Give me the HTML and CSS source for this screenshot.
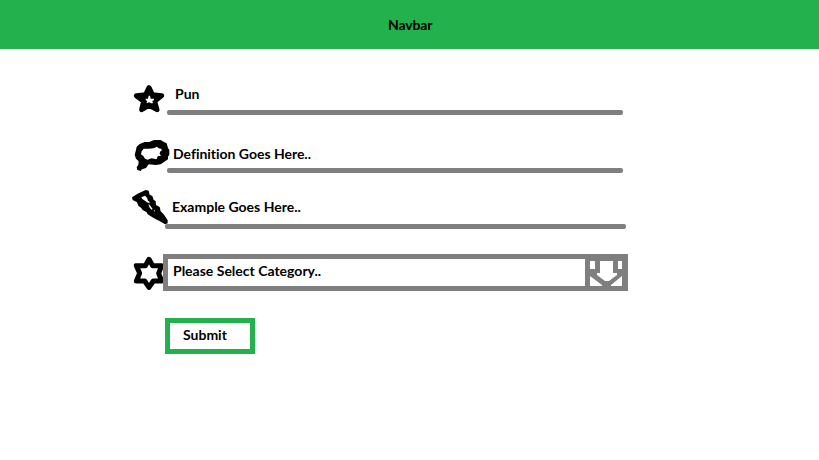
FILE: index.html
```html
<!DOCTYPE html>
<html lang="en">
<head>
<meta charset="utf-8">
<title>Navbar</title>
<link rel="stylesheet" href="styles.css">
</head>
<body>
<header class="navbar"><span class="brand">Navbar</span></header>
<form class="form">
  <div class="row row-pun">
    <svg class="icon" viewBox="15 6 90 105"><path fill-rule="evenodd" stroke="#000" stroke-width="15" stroke-linejoin="round" d="M63 29L73 50L101 53L80 70L87 95L63 82L41 95L47 70L25 53L53 50Z"/><path fill="#fff" d="M62 53H66L68 62H78V66L73 69L75 76H69L64 73L56 76L57 69L53 66V62H60Z"/></svg>
    <div class="field"><span class="text pun">Pun</span></div>
  </div>
  <div class="row row-definition">
    <svg class="icon" viewBox="15 18 90 105"><path fill-rule="evenodd" d="M35 36L50 30H64L78 24H98L108 30L116 34L120 48L124 54V68L120 74V82L108 90L98 97L84 99L62 97L54 108L42 112L38 117L28 114L26 106L31 98L32 88L24 80L20 68L23 58L26 44ZM47 50L41 58L39 67L46 72L51 80L59 83L70 79L86 82L89 73L99 71L95 65L96 59L102 55L99 50L92 49L87 44L77 49L62 50Z"/></svg>
    <div class="field"><span class="text definition">Definition Goes Here..</span></div>
  </div>
  <div class="row row-example">
    <svg class="icon" viewBox="15 18 90 117"><path fill-rule="evenodd" d="M12 40L29 29L53 18L62 20L65 32L73 36L77 48L83 51L84 63L95 69L98 82L107 91L119 109V118L111 121L96 112L78 103L59 91L56 85L44 78L39 71L31 65L27 55L14 48ZM40 40L51 35L57 41L60 50L65 54L64 58L57 55L51 50L43 45ZM61 60L65 63L70 70L74 75L71 77L65 71ZM77 79H81L80 83Z"/></svg>
    <div class="field"><span class="text example">Example Goes Here..</span></div>
  </div>
  <div class="row row-category">
    <svg class="icon" viewBox="15 12 90 111"><path fill="none" stroke="#000" stroke-width="15" stroke-linejoin="round" d="M63 28L74 47H101L92 70L101 93H76L63 112L50 93H25L35 70L25 47H52Z"/></svg>
    <div class="select">
      <span class="text category">Please Select Category..</span>
      <svg class="arrow" viewBox="585 254 43 37"><path fill="#7f7f7f" d="M585 254H627V256H628V290H626V291H585Z"/><path fill="#fff" d="M590 261H595V269H590ZM600 261H613V273H617V275L609 281H605L597 275V273H600ZM618 261H622V269H618ZM590 276L602 285V286H590ZM622 276V286H611V285Z"/></svg>
    </div>
  </div>
  <button class="submit" type="button"><span class="text submit-label">Submit</span></button>
</form>
</body>
</html>
```

FILE: styles.css
```css
body {
  margin: 0;
  background: #fff;
  color: #000;
  font: 700 14px/18px Lato, "Open Sans", sans-serif;
  font-variant-ligatures: none;
}
.navbar {
  height: 49px;
  box-sizing: border-box;
  padding: 16px 0 0 388px;
  background: #22b14c;
}
.text, .brand {
  display: block;
  white-space: nowrap;
}
.brand { letter-spacing: -0.15px; }
.definition { letter-spacing: -0.02px; }
.form {
  width: 495px;
  margin-left: 133px;
  padding-top: 31px;
}
.row { display: flex; }
.icon {
  flex: none;
  width: 30px;
  height: 100%;
  overflow: visible;
}
.field {
  box-sizing: border-box;
  width: 456px;
  margin-left: 4px;
  position: relative;
}
.field::after {
  content: "";
  position: absolute;
  left: 0;
  right: 0;
  bottom: 0;
  height: 5px;
  border-radius: 2px;
  background: #7f7f7f;
}
.row-pun { height: 35px; }
.row-pun .field { padding: 5px 0 0 8px; }
.row-definition { height: 35px; margin-top: 23px; }
.row-definition .field { padding: 7px 0 0 6px; }
.row-example { height: 39px; margin-top: 17px; }
.row-example .field {
  width: 461px;
  margin-left: 2px;
  padding: 8px 0 0 7px;
}
.row-category { height: 37px; margin-top: 25px; }
.select {
  box-sizing: border-box;
  display: flex;
  width: 465px;
  justify-content: space-between;
  border: solid #7f7f7f;
  border-width: 5px 0 5px 5px;
}
.category { padding: 3px 0 0 5px; }
.arrow {
  flex: none;
  width: 43px;
  height: 37px;
  margin: -5px 0;
}
.submit {
  box-sizing: border-box;
  display: flex;
  width: 90px;
  height: 36px;
  margin: 27px 0 0 32px;
  padding: 3px 0 0 13px;
  border: 5px solid #22b14c;
  background: #fff;
  color: inherit;
  font: inherit;
}
```
